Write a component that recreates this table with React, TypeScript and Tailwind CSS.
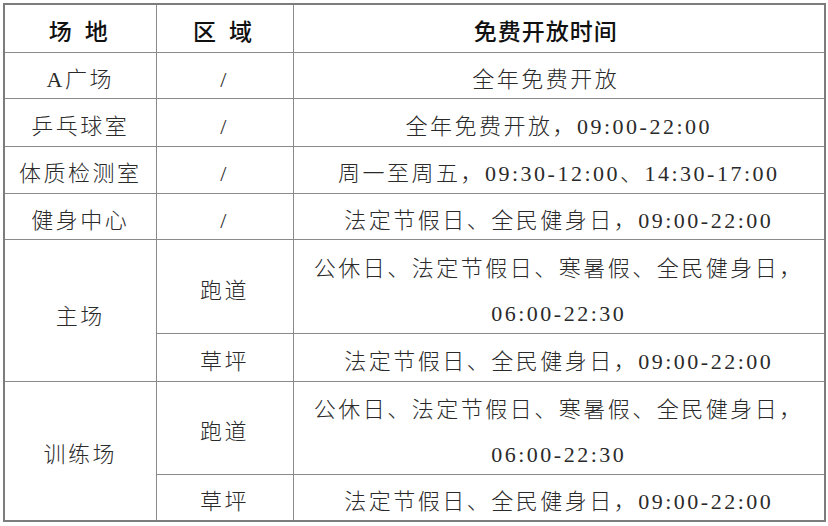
import React from "react";

const body =
  "font-['Liberation_Serif','Noto_Sans_CJK_SC',serif] font-light text-[22px] tracking-[2.5px] text-[#2a2a2a] leading-[28px]";
const head =
  "font-['Noto_Sans_CJK_SC',sans-serif] font-medium text-[23px] text-[#111] leading-[28px]";
const cell = "border border-[#8a8a8a] text-center align-middle p-0";
const one = "pt-[9px]";
const two = "pt-[5px]";

function TwoLine() {
  return (
    <div className="leading-[45px] -mb-[4px]">
      公休日、法定节假日、寒暑假、全民健身日，
      <br />
      06:00-22:30
    </div>
  );
}

export default function App() {
  return (
    <div className="w-[828px] h-[526px] bg-white overflow-hidden pl-[3px] pt-[3px]">
      <table className="table-fixed border-collapse border-2 border-[#7c7c7c] w-[821px]">
        <colgroup>
          <col className="w-[152px]" />
          <col className="w-[137px]" />
          <col className="w-[532px]" />
        </colgroup>
        <tbody>
          <tr className="h-[48px]">
            <td className={`${cell} ${head} pt-[4px] tracking-[4px]`}>场 地</td>
            <td className={`${cell} ${head} pt-[4px] tracking-[4px]`}>区 域</td>
            <td className={`${cell} ${head} pt-[4px] tracking-[1px] pr-[26px]`}>免费开放时间</td>
          </tr>
          <tr className="h-[46px]">
            <td className={`${cell} ${body} ${one}`}>A广场</td>
            <td className={`${cell} ${body} ${one}`}>/</td>
            <td className={`${cell} ${body} ${one} pr-[26px]`}>全年免费开放</td>
          </tr>
          <tr className="h-[48px]">
            <td className={`${cell} ${body} ${one}`}>乒乓球室</td>
            <td className={`${cell} ${body} ${one}`}>/</td>
            <td className={`${cell} ${body} ${one}`}>全年免费开放，09:00-22:00</td>
          </tr>
          <tr className="h-[47px]">
            <td className={`${cell} ${body} ${one}`}>体质检测室</td>
            <td className={`${cell} ${body} ${one}`}>/</td>
            <td className={`${cell} ${body} ${one}`}>周一至周五，09:30-12:00、14:30-17:00</td>
          </tr>
          <tr className="h-[46px]">
            <td className={`${cell} ${body} ${one}`}>健身中心</td>
            <td className={`${cell} ${body} ${one}`}>/</td>
            <td className={`${cell} ${body} ${one}`}>法定节假日、全民健身日，09:00-22:00</td>
          </tr>
          <tr className="h-[94px]">
            <td rowSpan={2} className={`${cell} ${body} pt-[14px]`}>主场</td>
            <td className={`${cell} ${body} ${one}`}>跑道</td>
            <td className={`${cell} ${body} ${two}`}>
              <TwoLine />
            </td>
          </tr>
          <tr className="h-[48px]">
            <td className={`${cell} ${body} ${one}`}>草坪</td>
            <td className={`${cell} ${body} ${one}`}>法定节假日、全民健身日，09:00-22:00</td>
          </tr>
          <tr className="h-[93px]">
            <td rowSpan={2} className={`${cell} ${body} ${one}`}>训练场</td>
            <td className={`${cell} ${body} ${one}`}>跑道</td>
            <td className={`${cell} ${body} ${two}`}>
              <TwoLine />
            </td>
          </tr>
          <tr className="h-[47px]">
            <td className={`${cell} ${body} ${one}`}>草坪</td>
            <td className={`${cell} ${body} ${one}`}>法定节假日、全民健身日，09:00-22:00</td>
          </tr>
        </tbody>
      </table>
    </div>
  );
}
